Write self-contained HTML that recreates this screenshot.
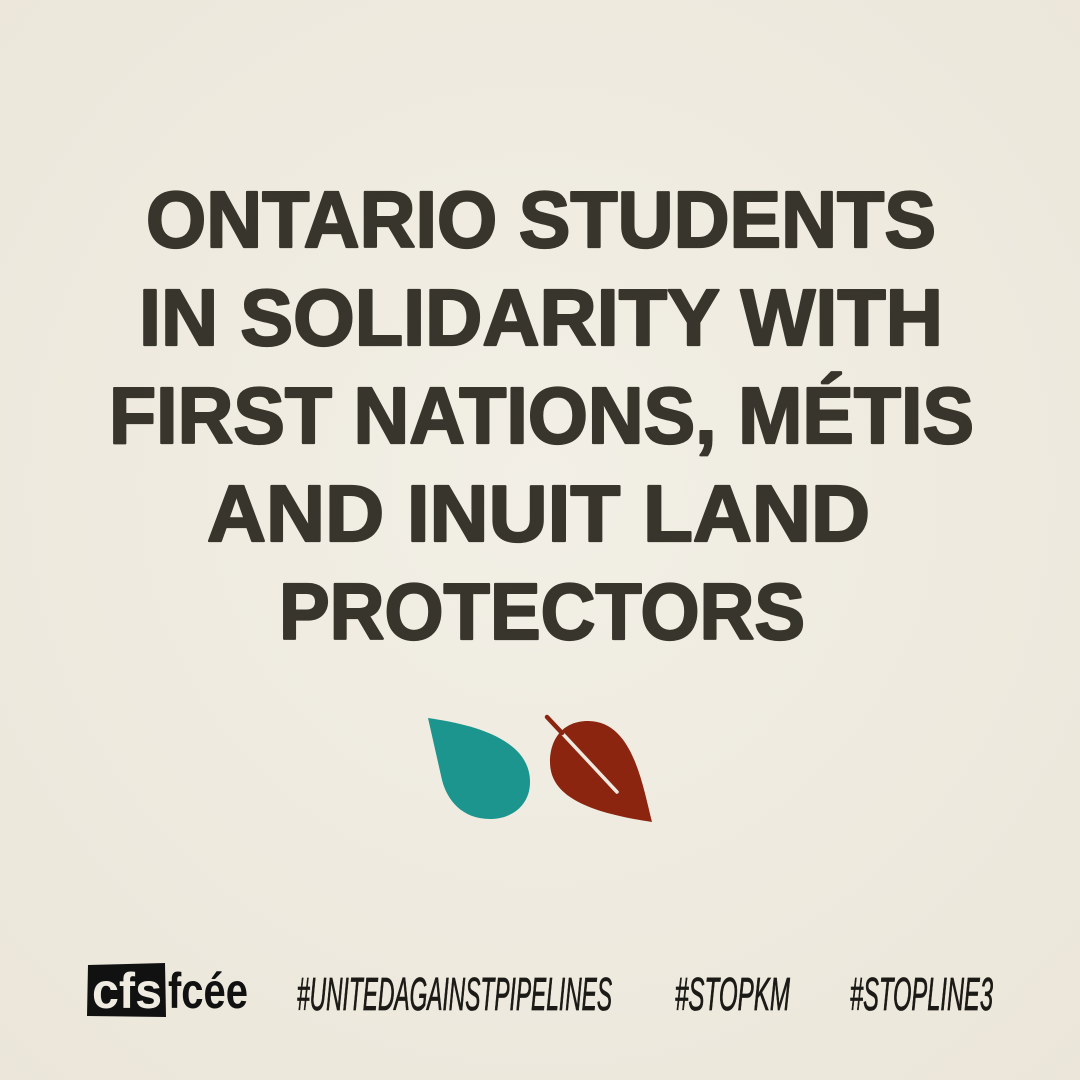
<!DOCTYPE html>
<html><head><meta charset="utf-8"><style>
html,body{margin:0;padding:0;background:#efebe0;}
svg{display:block}
</style></head><body>
<svg width="1080" height="1080" viewBox="0 0 1080 1080" xmlns="http://www.w3.org/2000/svg">
<defs>
<radialGradient id="bg" cx="50%" cy="45%" r="75%">
<stop offset="0" stop-color="#f2efe6"/><stop offset="1" stop-color="#ebe6d9"/>
</radialGradient>
</defs>
<rect width="1080" height="1080" fill="url(#bg)"/>
<g fill="#38352c" stroke="#38352c" stroke-width="2.2" stroke-linejoin="round" font-family="Liberation Sans, sans-serif" font-weight="bold" font-size="80">
<text x="146" y="247" textLength="790" lengthAdjust="spacingAndGlyphs">ONTARIO STUDENTS</text>
<text x="139" y="345" textLength="804" lengthAdjust="spacingAndGlyphs">IN SOLIDARITY WITH</text>
<text x="109" y="443" textLength="865" lengthAdjust="spacingAndGlyphs">FIRST NATIONS, MÉTIS</text>
<text x="207" y="541" textLength="663" lengthAdjust="spacingAndGlyphs">AND INUIT LAND</text>
<text x="279" y="639" textLength="526" lengthAdjust="spacingAndGlyphs">PROTECTORS</text>
</g>
<path d="M428,718 C470,724 530,738 530,782 C530,805 512,819 490,819 C462,819 447,800 442,780 Z" fill="#1b958d"/>
<path d="M652,822 C642,782 632,721 588,721 C562,721 550,740 550,762 C550,795 585,812 652,822 Z" fill="#8c2510"/>
<line x1="547" y1="717" x2="617" y2="792" stroke="#efebe0" stroke-width="3.5" stroke-linecap="round"/>
<line x1="547" y1="717" x2="562" y2="733" stroke="#8c2510" stroke-width="4.5" stroke-linecap="round"/>
<path d="M88,965 L165,963 L166,1017 L87,1016 Z" fill="#111"/>
<g font-family="Liberation Sans, sans-serif" font-weight="bold" font-size="50">
<text x="92" y="1008" fill="#efebe0" textLength="70" lengthAdjust="spacingAndGlyphs">cfs</text>
<text x="168" y="1008" fill="#111" textLength="80" lengthAdjust="spacingAndGlyphs">fcée</text>
</g>
<g fill="#1c1a16" stroke="#1c1a16" stroke-width="0.8" font-family="Liberation Sans Narrow, Liberation Sans, sans-serif" font-style="italic" font-size="46">
<text x="297" y="1010" textLength="315" lengthAdjust="spacingAndGlyphs">#UNITEDAGAINSTPIPELINES</text>
<text x="675" y="1010" textLength="115" lengthAdjust="spacingAndGlyphs">#STOPKM</text>
<text x="850" y="1010" textLength="143" lengthAdjust="spacingAndGlyphs">#STOPLINE3</text>
</g>
</svg>
</body></html>
